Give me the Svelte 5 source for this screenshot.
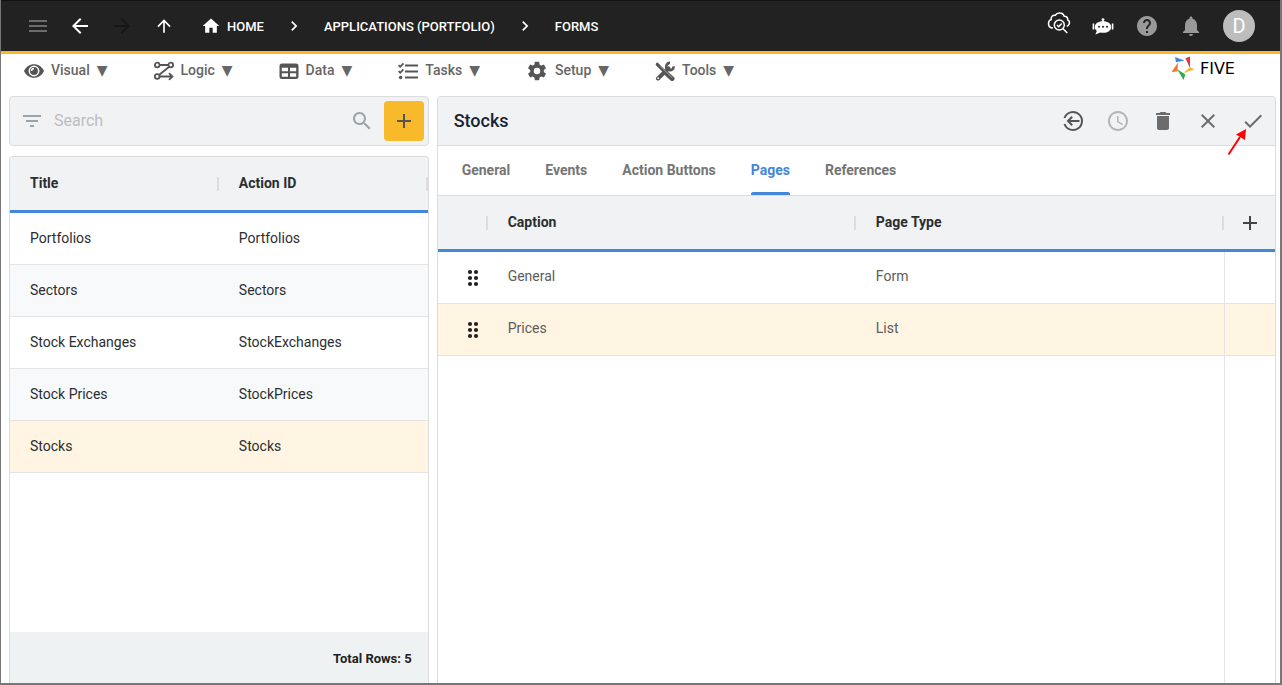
<script lang="ts">
  const icons: Record<string, string> = {
    menu: 'M3 18h18v-2H3v2zm0-5h18v-2H3v2zm0-7v2h18V6H3z',
    back: 'M20 11H7.83l5.59-5.59L12 4l-8 8 8 8 1.41-1.41L7.83 13H20v-2z',
    forward: 'M12 4l-1.41 1.41L16.17 11H4v2h12.17l-5.58 5.59L12 20l8-8z',
    up: 'M4 12l1.41 1.41L11 7.83V20h2V7.83l5.58 5.59L20 12l-8-8-8 8z',
    home: 'M10 20v-6h4v6h5v-8h3L12 3 2 12h3v8z',
    chevron: 'M10 6L8.59 7.41 13.17 12l-4.58 4.59L10 18l6-6z',
    help: 'M12 2C6.48 2 2 6.48 2 12s4.48 10 10 10 10-4.48 10-10S17.52 2 12 2zm1 17h-2v-2h2v2zm2.07-7.75l-.9.92C13.45 12.9 13 13.5 13 15h-2v-.5c0-1.1.45-2.1 1.17-2.83l1.24-1.26c.37-.36.59-.86.59-1.41 0-1.1-.9-2-2-2s-2 .9-2 2H8c0-2.21 1.79-4 4-4s4 1.79 4 4c0 .88-.36 1.68-.93 2.25z',
    bell: 'M12 22c1.1 0 2-.9 2-2h-4c0 1.1.89 2 2 2zm6-6v-5c0-3.07-1.64-5.64-4.5-6.32V4c0-.83-.67-1.5-1.5-1.5s-1.5.67-1.5 1.5v.68C7.63 5.36 6 7.92 6 11v5l-2 2v1h16v-1l-2-2z',
    filter: 'M10 18h4v-2h-4v2zM3 6v2h18V6H3zm3 7h12v-2H6v2z',
    search: 'M15.5 14h-.79l-.28-.27C15.41 12.59 16 11.11 16 9.5 16 5.91 13.09 3 9.5 3S3 5.91 3 9.5 5.91 16 9.5 16c1.61 0 3.09-.59 4.23-1.57l.27.28v.79l5 4.99L20.49 19l-4.99-5zm-6 0C7.01 14 5 11.99 5 9.5S7.01 5 9.5 5 14 7.01 14 9.5 11.99 14 9.5 14z',
    add: 'M19 13h-6v6h-2v-6H5v-2h6V5h2v6h6v2z',
    clock: 'M11.99 2C6.47 2 2 6.48 2 12s4.47 10 9.99 10C17.52 22 22 17.52 22 12S17.52 2 11.99 2zM12 20c-4.42 0-8-3.58-8-8s3.58-8 8-8 8 3.58 8 8-3.58 8-8 8zm.5-13H11v6l5.25 3.15.75-1.23-4.5-2.67z',
    delete: 'M6 19c0 1.1.9 2 2 2h8c1.1 0 2-.9 2-2V7H6v12zM19 4h-3.5l-1-1h-5l-1 1H5v2h14V4z',
    close: 'M19 6.41L17.59 5 12 10.59 6.41 5 5 6.41 10.59 12 5 17.59 6.41 19 12 13.41 17.59 19 19 17.59 13.41 12z',
    check: 'M9 16.17L4.83 12l-1.42 1.41L9 19 21 7l-1.41-1.41z',
    cog: 'M12,15.5A3.5,3.5 0 0,1 8.5,12A3.5,3.5 0 0,1 12,8.5A3.5,3.5 0 0,1 15.5,12A3.5,3.5 0 0,1 12,15.5M19.43,12.97C19.47,12.65 19.5,12.33 19.5,12C19.5,11.67 19.47,11.34 19.43,11L21.54,9.37C21.73,9.22 21.78,8.95 21.66,8.73L19.66,5.27C19.54,5.05 19.27,4.96 19.05,5.05L16.56,6.05C16.04,5.66 15.5,5.32 14.87,5.07L14.5,2.42C14.46,2.18 14.25,2 14,2H10C9.75,2 9.54,2.18 9.5,2.42L9.13,5.07C8.5,5.32 7.96,5.66 7.44,6.05L4.95,5.05C4.73,4.96 4.46,5.05 4.34,5.27L2.34,8.73C2.21,8.95 2.27,9.22 2.46,9.37L4.57,11C4.53,11.34 4.5,11.67 4.5,12C4.5,12.33 4.53,12.65 4.57,12.97L2.46,14.63C2.27,14.78 2.21,15.05 2.34,15.27L4.34,18.73C4.46,18.95 4.73,19.03 4.95,18.95L7.44,17.94C7.96,18.34 8.5,18.68 9.13,18.93L9.5,21.58C9.54,21.82 9.75,22 10,22H14C14.25,22 14.46,21.82 14.5,21.58L14.87,18.93C15.5,18.67 16.04,18.34 16.56,17.94L19.05,18.95C19.27,19.03 19.54,18.95 19.66,18.73L21.66,15.27C21.78,15.05 21.73,14.78 21.54,14.63L19.43,12.97Z',
  };

  const menus = ['Visual', 'Logic', 'Data', 'Tasks', 'Setup', 'Tools'];
  const tabs = ['General', 'Events', 'Action Buttons', 'Pages', 'References'];

  const forms = [
    { title: 'Portfolios', actionId: 'Portfolios' },
    { title: 'Sectors', actionId: 'Sectors' },
    { title: 'Stock Exchanges', actionId: 'StockExchanges' },
    { title: 'Stock Prices', actionId: 'StockPrices' },
    { title: 'Stocks', actionId: 'Stocks' },
  ];

  const pages = [
    { caption: 'General', type: 'Form' },
    { caption: 'Prices', type: 'List' },
  ];

  let search = $state('');
  let activeTab = $state('Pages');
  let selectedForm = $state('Stocks');
  let selectedPage = $state('Prices');
</script>

{#snippet icon(name: string, size = 24)}
  <svg width={size} height={size} viewBox="0 0 24 24" fill="currentColor" aria-hidden="true"><path d={icons[name]} /></svg>
{/snippet}

{#snippet menuIcon(name: string)}
  <svg width="20" height="20" viewBox="0 0 20 20" fill="none" stroke="currentColor" stroke-width="1.8" aria-hidden="true">
    {#if name === 'Visual'}
      <path d="M0 10C2 5.6 5.6 3.2 10 3.2S18 5.6 20 10c-2 4.4-5.6 6.800-10 6.800S2 14.400 0 10z" fill="currentColor" stroke="none" />
      <circle cx="10" cy="10" r="4.7" fill="currentColor" stroke="#fff" stroke-width="1.5" />
      <path d="M7.600 10A2.500 2.500 0 0 1 10 7.500" stroke="#fff" stroke-width="1.4" />
    {:else if name === 'Logic'}
      <circle cx="3.2" cy="4" r="2.3" />
      <circle cx="16.8" cy="4" r="2.3" />
      <circle cx="3.2" cy="15.5" r="2.3" />
      <path d="M5.500 4h9M15.200 5.700L5 14M5.500 15.500H18M15 12.200l3.400 3.300-3.400 3.300" />
    {:else if name === 'Data'}
      <path d="M3 2.500h14a2.500 2.500 0 0 1 2.500 2.500v10.500A2.500 2.500 0 0 1 17 18H3A2.500 2.500 0 0 1 .500 15.500V5A2.500 2.500 0 0 1 3 2.500zM2.800 6.800v3.400H9V6.800zM11 6.800v3.400h6.200V6.800zM2.800 12.300v3.400H9v-3.400zM11 12.300v3.400h6.200v-3.400z" fill="currentColor" fill-rule="evenodd" stroke="none" />
    {:else if name === 'Tasks'}
      <path d="M7 4.500h13M7 10.500h13M7 16.500h13" stroke-width="2.2" />
      <path d="M.600 4.200l1.600 1.600L5.400 2.400M.600 10.200l1.600 1.600 3.200-3.400" />
      <circle cx="2.6" cy="16.5" r="1.7" fill="currentColor" stroke="none" />
    {:else if name === 'Tools'}
      <path d="M2.300 3.300L9 10" stroke-width="3.2" stroke-linecap="round" />
      <path d="M12 13l5.200 4.800" stroke-width="4.6" stroke-linecap="round" />
      <path d="M3 17.500L13.500 7.300" stroke-width="4" stroke-linecap="round" />
      <path d="M18.600 5.400A3.700 3.700 0 1 1 15 1.900" stroke-width="2.6" />
      <path d="M5 4.500l12 12.200" stroke="#fff" stroke-width=".5" />
      <circle cx="3.1" cy="17.2" r=".9" fill="#fff" stroke="none" />
    {/if}
  </svg>
{/snippet}

<div class="app">
  <header class="topbar">
    <div class="history">
      <button class="icon-button dim" aria-label="Menu">{@render icon('menu')}</button>
      <button class="icon-button" aria-label="Back">{@render icon('back')}</button>
      <button class="icon-button disabled" aria-label="Forward">{@render icon('forward')}</button>
      <button class="icon-button" aria-label="Up">{@render icon('up', 20)}</button>
    </div>

    <nav class="breadcrumbs" aria-label="Breadcrumb">
      <a href="#home">{@render icon('home', 20)}HOME</a>
      {@render icon('chevron', 20)}
      <a href="#applications">APPLICATIONS (PORTFOLIO)</a>
      {@render icon('chevron', 20)}
      <a href="#forms">FORMS</a>
    </nav>

    <div class="account">
      <button class="icon-button" aria-label="Inspect deployment">
        <svg class="cloud" width="24" height="24" viewBox="0 3 24 24" fill="none" stroke="currentColor" stroke-width="1.5" aria-hidden="true">
          <path d="M6 17C3.500 17 1.500 15.300 1.500 12.500 1.500 10.500 2.700 9 4.200 8.600 3.700 5.800 5.700 3.800 8.200 4.300 9.200 2.600 11 1.800 13 2c2.200.1 3.700 1.400 4.200 3.200 2.200-.2 3.800 1.500 3.500 3.600 1.600.8 2 2.800 1.500 4.200-.4 1.200-1.300 2-2.500 2.300" />
          <circle cx="12.3" cy="14" r="5" />
          <path d="M16 17.800l4.300 4.200M10 14l1.700 1.700 3-3.300" />
        </svg>
      </button>
      <button class="icon-button" aria-label="Assistant">
        <svg width="24" height="24" viewBox="0 0 24 24" fill="currentColor" aria-hidden="true">
          <circle cx="12" cy="5.6" r="1.4" />
          <path d="M11.300 6h1.400v2h-1.400zM1.600 9.600h1.600v6H1.600zM20.800 9.600h1.600v6h-1.600z" />
          <path d="M12 7.200c4.900 0 8.200 2.300 8.200 5.800s-3.300 5.800-8.200 5.800c-.9 0-1.800-.1-2.600-.3L4.300 20.400l1.500-3.500C4.500 15.900 3.800 14.600 3.800 13c0-3.500 3.300-5.800 8.200-5.800z" />
          <g fill="#222"><circle cx="8" cy="12.7" r="1" /><circle cx="12" cy="12.7" r="1" /><circle cx="16" cy="12.7" r="1" /></g>
        </svg>
      </button>
      <button class="icon-button muted" aria-label="Help">{@render icon('help')}</button>
      <button class="icon-button muted" aria-label="Notifications">{@render icon('bell')}</button>
      <button class="avatar" aria-label="Account">D</button>
    </div>
  </header>

  <div class="menubar">
    <nav class="menus" aria-label="Main">
      {#each menus as menu}
        <button class="menu">
          {#if menu === 'Setup'}
            {@render icon('cog', 22)}
          {:else}
            {@render menuIcon(menu)}
          {/if}
          <span>{menu}</span>
          <span class="caret">▼</span>
        </button>
      {/each}
    </nav>
    <a class="logo" href="#five">
      <svg width="24" height="24" viewBox="0 0 24 24" aria-hidden="true">
        <path d="M4 1l9.500 3.500L5 6.200z" fill="#3f86d9" />
        <path d="M14.500 2.200L19 .5V12z" fill="#e9333f" />
        <path d="M23.500 13.500L12.500 17l6.500-6z" fill="#f8b92b" />
        <path d="M6 13l8.300 5.500-1.800 5.500z" fill="#34a853" />
        <path d="M7 6.500l-.5 9L.500 16z" fill="#f5782a" />
      </svg>
      <span>FIVE</span>
    </a>
  </div>

  <main class="workspace">
    <section class="side" aria-label="Forms">
      <div class="searchbar">
        <label for="search">{@render icon('filter')}</label>
        <input id="search" type="text" aria-label="Search" placeholder="Search" bind:value={search} />
        {@render icon('search')}
        <button class="add" aria-label="Add form">{@render icon('add')}</button>
      </div>

      <div class="list">
        <table class="grid">
          <thead>
            <tr><th>Title</th><th>Action ID</th></tr>
          </thead>
          <tbody>
            {#each forms as form}
              <tr class:selected={form.title === selectedForm} onclick={() => (selectedForm = form.title)}>
                <td>{form.title}</td>
                <td>{form.actionId}</td>
              </tr>
            {/each}
          </tbody>
        </table>
        <footer class="totals">Total Rows: {forms.length}</footer>
      </div>
    </section>

    <section class="detail" aria-labelledby="detail-title">
      <div class="toolbar">
        <h1 id="detail-title">Stocks</h1>
        <div class="actions">
          <button class="action dark" aria-label="Go back">
            <svg width="24" height="24" viewBox="0 0 24 24" fill="none" stroke="currentColor" stroke-width="2" aria-hidden="true">
              <path d="M3.500 9a9 9 0 1 1 0 6M18.500 12H7M11.200 7.800L7 12l4.200 4.200" />
            </svg>
          </button>
          <button class="action faded" aria-label="History">{@render icon('clock')}</button>
          <button class="action" aria-label="Delete">{@render icon('delete')}</button>
          <button class="action" aria-label="Cancel">{@render icon('close')}</button>
          <button class="action" aria-label="Save">{@render icon('check')}</button>
        </div>
        <svg class="pointer" width="20" height="28" viewBox="0 0 20 28" aria-hidden="true">
          <path d="M1.500 26.500L13 9" stroke="#f00" stroke-width="2" />
          <path d="M19 1L18 12 9 6.500z" fill="#f00" />
        </svg>
      </div>

      <div class="tabs" role="tablist">
        {#each tabs as tab}
          <button role="tab" class="tab" class:active={tab === activeTab} aria-selected={tab === activeTab} onclick={() => (activeTab = tab)}>{tab}</button>
        {/each}
      </div>

      <table class="grid pages">
        <colgroup><col class="order" /><col /><col /><col class="tools" /></colgroup>
        <thead>
          <tr>
            <th aria-label="Order"></th>
            <th>Caption</th>
            <th>Page Type</th>
            <th class="tool"><button class="plain" aria-label="Add page">{@render icon('add')}</button></th>
          </tr>
        </thead>
        <tbody>
          {#each pages as page}
            <tr class:selected={page.caption === selectedPage} onclick={() => (selectedPage = page.caption)}>
              <td class="handle">
                <svg width="12" height="18" viewBox="0 0 12 18" fill="currentColor" aria-hidden="true">
                  {#each [3, 9, 15] as y}
                    <circle cx="3" cy={y} r="2.1" /><circle cx="9" cy={y} r="2.1" />
                  {/each}
                </svg>
              </td>
              <td>{page.caption}</td>
              <td>{page.type}</td>
              <td class="tool"></td>
            </tr>
          {/each}
        </tbody>
      </table>
      <div class="rest"><div></div></div>
    </section>
  </main>
</div>

<style>
  :global(body) {
    margin: 0;
    background: #fff;
  }

  .app {
    box-sizing: border-box;
    display: flex;
    flex-direction: column;
    height: 100vh;
    border: solid #777;
    border-width: 0 2px 2px 1px;
    font-family: Roboto, "Liberation Sans", sans-serif;
    font-size: 14px;
    color: #2b2e30;
    background: #fff;
  }

  svg {
    display: block;
    flex: none;
  }

  button {
    margin: 0;
    border: 0;
    padding: 0;
    font: inherit;
    color: inherit;
    background: none;
    cursor: pointer;
  }

  .topbar {
    display: flex;
    align-items: center;
    height: 50px;
    border-top: 1px solid #111;
    border-bottom: 3px solid #fbb829;
    padding: 0 25px 0 16px;
    color: #fff;
    background: #222;
  }

  .history,
  .account {
    display: flex;
    align-items: center;
  }

  .icon-button {
    display: flex;
    align-items: center;
    justify-content: center;
    width: 42px;
    height: 42px;
  }

  .account .icon-button {
    width: 44px;
  }

  .cloud {
    overflow: visible;
  }

  .dim {
    color: #6c6c6c;
  }

  .disabled {
    color: #161616;
  }

  .muted {
    color: #999;
  }

  .breadcrumbs {
    display: flex;
    flex: 1;
    align-items: center;
    gap: 20px;
    margin-left: 16px;
  }

  .breadcrumbs a {
    display: flex;
    align-items: center;
    gap: 6px;
    font-size: 13px;
    font-weight: 500;
    color: #fff;
    text-decoration: none;
  }

  .avatar {
    width: 32px;
    height: 32px;
    margin-left: 10px;
    border-radius: 50%;
    font-size: 20px;
    line-height: 32px;
    background: #bdbdbd;
  }

  .menubar {
    display: flex;
    justify-content: space-between;
    align-items: flex-start;
    height: 42px;
    padding: 0 20px 0 23px;
  }

  .menus {
    display: flex;
    gap: 46px;
  }

  .menu {
    display: flex;
    align-items: center;
    gap: 7px;
    height: 34px;
    font-weight: 500;
    color: #555;
  }

  .menu span {
    padding-bottom: 2px;
    color: #666;
  }

  .menu .caret {
    font: 14px "DejaVu Sans", sans-serif;
  }

  .logo {
    display: flex;
    align-items: center;
    gap: 5px;
    height: 28px;
    color: #000;
    text-decoration: none;
  }

  .logo span {
    width: 60px;
    font: 16px "DejaVu Sans", sans-serif;
  }

  .workspace {
    display: grid;
    flex: 1;
    grid-template-columns: minmax(0, 1fr) minmax(0, 2fr);
    gap: 8px;
    min-height: 0;
    padding: 0 4px 0 8px;
  }

  .side {
    display: flex;
    flex-direction: column;
    gap: 10px;
    min-height: 0;
  }

  .searchbar {
    box-sizing: border-box;
    display: flex;
    align-items: center;
    height: 50px;
    border: 1px solid #dcdcdc;
    border-radius: 4px;
    padding: 0 4px 0 10px;
    color: #9aa3a9;
    background: #f1f2f4;
  }

  .searchbar input {
    flex: 1;
    min-width: 0;
    border: 0;
    padding: 0 10px 2px;
    font: 16px Roboto, "Liberation Sans", sans-serif;
    color: #2b2e30;
    background: none;
    outline: none;
  }

  .searchbar input::placeholder {
    color: #bcbec0;
    opacity: 1;
  }

  .add {
    display: flex;
    align-items: center;
    justify-content: center;
    width: 40px;
    height: 40px;
    margin-left: 10px;
    border-radius: 4px;
    color: #555;
    background: #f8b92b;
  }

  .list,
  .detail {
    display: flex;
    flex-direction: column;
    min-height: 0;
    border: 1px solid #dcdcdc;
    border-bottom: 0;
    border-radius: 4px 4px 0 0;
    overflow: hidden;
  }

  .list {
    flex: 1;
  }

  .grid {
    width: 100%;
    table-layout: fixed;
    border-collapse: separate;
    border-spacing: 0;
  }

  .grid th {
    box-sizing: border-box;
    height: 56px;
    border-bottom: 3px solid #4486d8;
    padding: 0 20px 2px;
    font-weight: 700;
    text-align: left;
    background: linear-gradient(#dcdcde, #dcdcde) right center / 2px 14px no-repeat #f1f2f4;
  }

  .grid td {
    box-sizing: border-box;
    height: 52px;
    border-bottom: 1px solid #e4e4e4;
    padding: 0 20px 2px;
  }

  .grid tbody tr:nth-child(even) td {
    background: #f8f9fb;
  }

  .grid tbody tr.selected td {
    background: #fff5e2;
  }

  .totals {
    height: 51px;
    margin-top: auto;
    padding: 0 16px;
    font-size: 13px;
    font-weight: 700;
    line-height: 53px;
    text-align: right;
    color: #222;
    background: #eef2f3;
  }

  .toolbar {
    position: relative;
    display: flex;
    align-items: center;
    justify-content: space-between;
    height: 48px;
    border-bottom: 1px solid #dcdcdc;
    padding: 0 0 0 16px;
    background: #f1f2f4;
  }

  h1 {
    margin: 0;
    padding-bottom: 2px;
    font-size: 18px;
    font-weight: 500;
    color: #1a2233;
  }

  .actions {
    display: flex;
  }

  .action {
    display: flex;
    align-items: center;
    justify-content: center;
    width: 45px;
    height: 48px;
    color: #6c6c6c;
  }

  .dark {
    color: #555;
  }

  .faded {
    color: #b4b5b6;
  }

  .pointer {
    position: absolute;
    top: 31px;
    right: 28px;
    z-index: 1;
  }

  .tabs {
    display: flex;
    gap: 35px;
    height: 49px;
    border-bottom: 1px solid #dcdcdc;
    padding: 0 24px;
  }

  .tab {
    position: relative;
    padding-bottom: 2px;
    font-weight: 700;
    color: #757575;
  }

  .tab.active {
    color: #4486d8;
  }

  .tab.active::after {
    content: '';
    position: absolute;
    inset: auto 0 0;
    height: 3px;
    border-radius: 2px 2px 0 0;
    background: #4486d8;
  }

  .order {
    width: 50px;
  }

  .tools {
    width: 51px;
  }

  .pages td {
    padding-bottom: 4px;
    color: #5c5c5c;
  }

  .pages td.handle {
    padding: 0 0 0 29px;
    color: #222;
  }

  .pages .tool {
    padding: 0;
  }

  .pages th.tool {
    background: #f1f2f4;
  }

  .pages td.tool {
    border-left: 1px solid #e4e4e4;
  }

  .plain {
    display: flex;
    align-items: center;
    justify-content: center;
    width: 100%;
    height: 53px;
    color: #444;
  }

  .rest {
    display: flex;
    flex: 1;
    justify-content: flex-end;
  }

  .rest div {
    box-sizing: border-box;
    width: 51px;
    border-left: 1px solid #e4e4e4;
  }
</style>
